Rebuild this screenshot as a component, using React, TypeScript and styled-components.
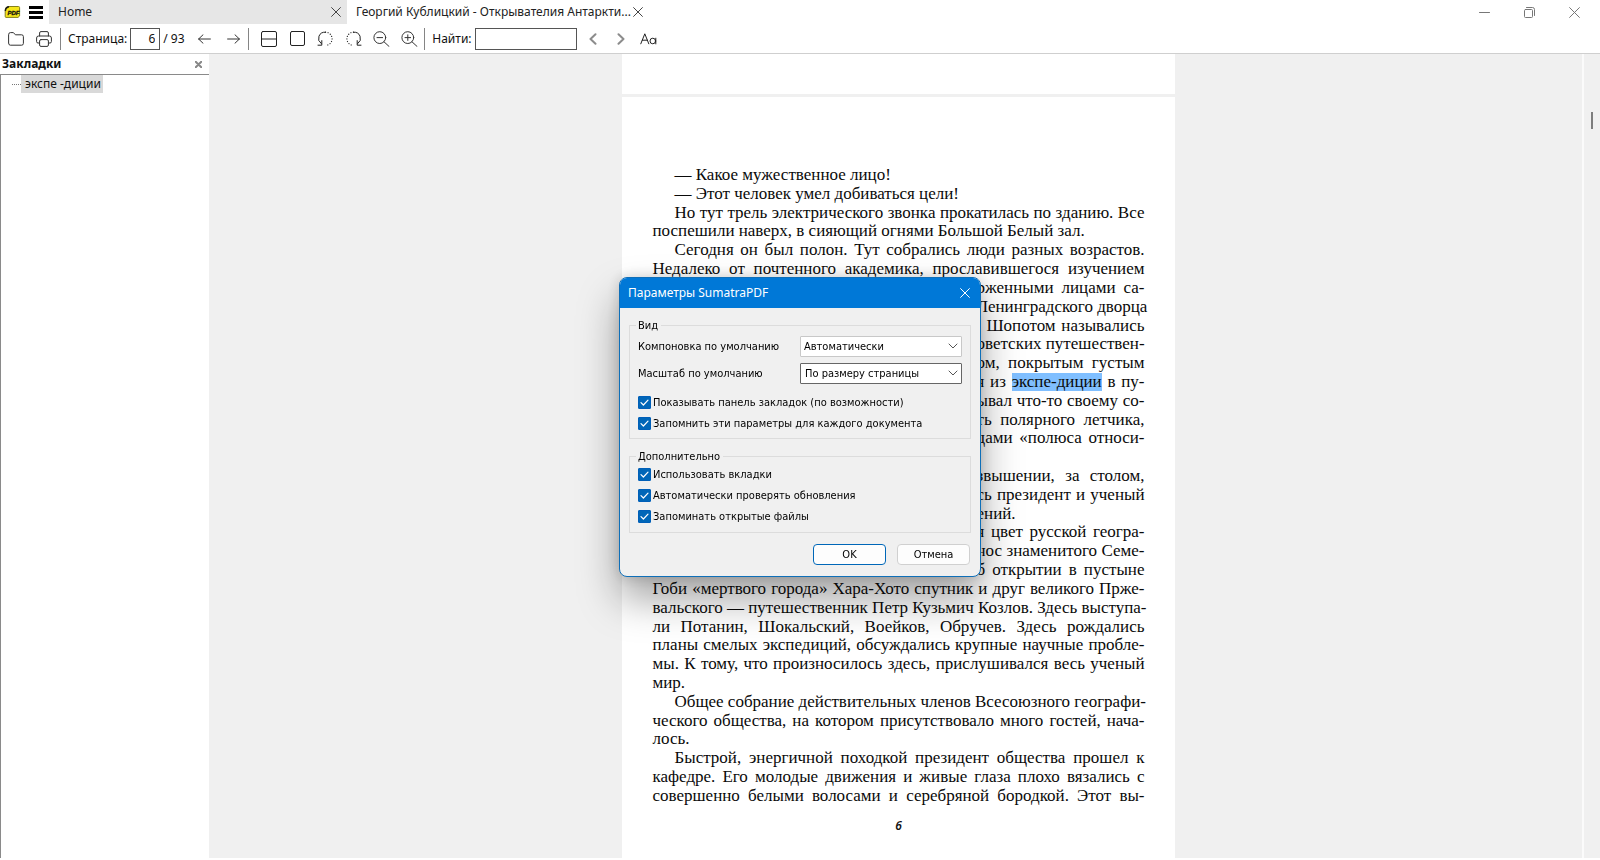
import React, { useState } from "react";
import styled, { createGlobalStyle, css } from "styled-components";

const uiFont = `"Noto Sans", "Open Sans", sans-serif`;
const dialogFont = `"DejaVu Sans Condensed", "DejaVu Sans", sans-serif`;
const bookFont = `"Liberation Serif", serif`;

const GlobalStyle = createGlobalStyle`
  *, *::before, *::after { box-sizing: border-box; }
  body { margin: 0; background: #fff; color: #111; font-family: ${uiFont}; font-size: 12px; }
  button, input, select { font: inherit; color: inherit; margin: 0; padding: 0; }
  p, h1, h2 { margin: 0; }
`;

const Shell = styled.div`
  display: flex;
  flex-direction: column;
  height: 100vh;
  padding-bottom: 2px;
  overflow: hidden;
`;

/* ---------- title bar ---------- */

const TitleBar = styled.header`
  display: flex;
  height: 24px;
  flex: none;
`;

const IconButton = styled.button<{ $width: number }>`
  display: flex;
  align-items: center;
  justify-content: center;
  width: ${(p) => p.$width}px;
  flex: none;
  border: 0;
  background: none;
`;

const AppMark = styled.div`
  display: flex;
  align-items: center;
  padding-left: 4px;
  width: 23px;
`;

const Tabs = styled.nav`
  display: flex;
  flex: 1;
  min-width: 0;
  padding-left: 1px;
`;

const Tab = styled.div<{ $active?: boolean }>`
  display: flex;
  align-items: center;
  justify-content: space-between;
  width: 298px;
  padding-left: 9px;
  background: ${(p) => (p.$active ? "#fff" : "#e6e6e6")};
`;

const TabLink = styled.a`
  color: #222;
  line-height: 24px;
  text-decoration: none;
  white-space: nowrap;
`;

const WindowButtons = styled.div`
  display: flex;
  padding-right: 3px;
`;

/* ---------- toolbar ---------- */

const Toolbar = styled.div`
  display: flex;
  align-items: center;
  flex: none;
  height: 30px;
  padding-left: 2px;
  border-bottom: 1px solid #cfcfcf;
`;

const Divider = styled.span`
  width: 1px;
  height: 22px;
  margin: 0 3px;
  background: #858585;
`;

const FieldLabel = styled.label`
  display: flex;
  align-items: center;
  gap: 3px;
  padding-left: 4px;
  white-space: nowrap;
`;

const TextBox = styled.input<{ $width: number }>`
  width: ${(p) => p.$width}px;
  height: 22px;
  padding: 0 4px;
  border: 1px solid #555;
  border-radius: 0;
  background: #fff;
  text-align: right;
  outline: 0;
`;

const PageTotal = styled.span`
  width: 26px;
  padding-left: 3px;
  white-space: nowrap;
`;

/* ---------- body ---------- */

const Body = styled.div`
  display: flex;
  flex: 1;
  min-height: 0;
`;

const Sidebar = styled.aside`
  display: flex;
  flex-direction: column;
  width: 209px;
  flex: none;
  background: #fff;
`;

const SidebarHeader = styled.div`
  display: flex;
  align-items: center;
  justify-content: space-between;
  height: 20px;
  padding-left: 2px;
`;

const SidebarTitle = styled.h2`
  font-size: 12px;
  line-height: 20px;
`;

const Tree = styled.div`
  flex: 1;
  border-top: 1px solid #8a8a8a;
  border-left: 1px solid #8a8a8a;
`;

const TreeRow = styled.div`
  display: flex;
  align-items: center;
  padding-left: 11px;
  height: 18px;
`;

const Branch = styled.span`
  width: 9px;
  border-top: 1px dotted #777;
`;

const TreeLink = styled.a`
  padding: 0 2px 0 4px;
  line-height: 18px;
  background: #d9d9d9;
  color: #111;
  text-decoration: none;
  white-space: nowrap;
`;

const Viewer = styled.main`
  display: flex;
  flex-direction: column;
  align-items: center;
  flex: 1;
  min-width: 0;
  padding-left: 5px;
  overflow: hidden;
  background: #f0f0f0;
`;

const PreviousPage = styled.div`
  flex: none;
  width: 553px;
  height: 40px;
  margin-bottom: 3px;
  background: #fff;
`;

const Page = styled.article`
  display: flex;
  flex-direction: column;
  flex: 1 0 auto;
  width: 553px;
  padding: 69px 30px 25px 31px;
  background: #fff;
`;

const PageText = styled.div`
  display: flex;
  flex-direction: column;
  justify-content: space-between;
  height: 639px;
  font-family: ${bookFont};
  font-size: 17px;
  color: #0a0a0a;
`;

const Paragraph = styled.p`
  display: contents;
`;

const Line = styled.span<{ $indent?: boolean; $ragged?: boolean; $tail?: boolean }>`
  height: 18px;
  line-height: 18px;
  white-space: nowrap;
  text-align-last: ${(p) => (p.$ragged ? "left" : "justify")};
  padding-left: ${(p) => (p.$indent ? "22px" : "0")};
  ${(p) =>
    p.$tail &&
    css`
      align-self: flex-end;
      width: 168px;
    `}
`;

const Highlight = styled.mark`
  display: inline-block;
  background: #80bfff;
  color: inherit;
`;

const Folio = styled.div`
  padding-top: 12px;
  text-align: center;
  font-size: 12px;
  font-style: italic;
  font-weight: 600;
  line-height: 18px;
`;

const ScrollBar = styled.div`
  display: flex;
  flex-direction: column;
  align-items: center;
  width: 18px;
  flex: none;
  padding-top: 58px;
  border-left: 2px solid #fbfbfb;
  background: #f0f0f0;
`;

const Thumb = styled.div`
  width: 2px;
  height: 17px;
  background: #7d7d7d;
`;

/* ---------- settings dialog ---------- */

const Overlay = styled.div`
  position: fixed;
  inset: 0;
  display: flex;
  align-items: center;
  justify-content: center;
  padding-bottom: 7px;
`;

const Dialog = styled.form`
  width: 362px;
  border: 1px solid #0f6fb8;
  border-radius: 8px;
  overflow: hidden;
  background: #f0f0f0;
  box-shadow: 0 22px 40px rgba(0, 0, 0, 0.36), 0 0 14px rgba(0, 0, 0, 0.16);
  font-family: ${dialogFont};
  font-size: 11px;
  color: #000;
`;

const DialogTitle = styled.div`
  display: flex;
  justify-content: space-between;
  height: 30px;
  padding-left: 8px;
  background: #0078d7;
  color: #fff;
`;

const DialogName = styled.h1`
  font-family: ${uiFont};
  font-size: 12px;
  font-weight: 400;
  line-height: 30px;
`;

const DialogBody = styled.div`
  display: flex;
  flex-direction: column;
  gap: 11px;
  padding: 11px 9px;
`;

const Group = styled.fieldset<{ $top: number; $bottom: number }>`
  display: flex;
  flex-direction: column;
  gap: 6px;
  min-width: 0;
  margin: 0;
  padding: ${(p) => p.$top}px 8px ${(p) => p.$bottom}px;
  border: 1px solid #dcdcdc;
`;

const Legend = styled.legend`
  margin-left: -2px;
  padding: 0 3px 0 2px;
  line-height: 14px;
`;

const Row = styled.div`
  display: flex;
  align-items: center;
  justify-content: space-between;
  height: 21px;
`;

const SelectBox = styled.div`
  display: grid;
  align-items: center;
  width: 162px;

  > * {
    grid-area: 1 / 1;
  }
  > svg {
    justify-self: end;
    margin-right: 4px;
    pointer-events: none;
  }
`;

const Select = styled.select<{ $focused?: boolean }>`
  appearance: none;
  width: 100%;
  height: 21px;
  padding: 0 18px 0 ${(p) => (p.$focused ? 4 : 3)}px;
  border: 1px solid ${(p) => (p.$focused ? "#666" : "#c8c8c8")};
  border-radius: 1px;
  background: #fff;
`;

const Checks = styled.div<{ $spaced?: boolean }>`
  display: flex;
  flex-direction: column;
  gap: 8px;
  padding-top: ${(p) => (p.$spaced ? 6 : 0)}px;
`;

const CheckLabel = styled.label`
  display: flex;
  align-items: center;
  gap: 2px;
  height: 13px;
  white-space: nowrap;
`;

const CheckBox = styled.span`
  display: grid;
  width: 13px;
  height: 13px;

  > * {
    grid-area: 1 / 1;
  }
  > svg {
    pointer-events: none;
  }
`;

const CheckInput = styled.input`
  appearance: none;
  width: 13px;
  height: 13px;
  border: 1px solid #005fb8;
  border-radius: 1px;

  &:checked {
    background: #0066b8;
  }
`;

const Actions = styled.div`
  display: flex;
  justify-content: flex-end;
  gap: 11px;
  padding-right: 1px;
`;

const PushButton = styled.button<{ $primary?: boolean }>`
  width: 73px;
  height: 21px;
  border: 1px solid ${(p) => (p.$primary ? "#0067b8" : "#d0d0d0")};
  border-radius: 4px;
  background: #fdfdfd;
`;

/* ---------- icons ---------- */

const Svg = ({ w, h, sw = 1, color = "#333", children }: { w: number; h: number; sw?: number; color?: string; children: React.ReactNode }) => (
  <svg width={w} height={h} viewBox={`0 0 ${w} ${h}`} fill="none" stroke={color} strokeWidth={sw} strokeLinecap="round" strokeLinejoin="round" aria-hidden="true">
    {children}
  </svg>
);

const Cross = ({ size = 10, color = "#444", sw = 1 }: { size?: number; color?: string; sw?: number }) => (
  <Svg w={size} h={size} color={color} sw={sw}>
    <path d={`M.6 .6 L${size - 0.6} ${size - 0.6} M${size - 0.6} .6 L.6 ${size - 0.6}`} />
  </Svg>
);

const AppIcon = () => (
  <svg width="17" height="14" viewBox="0 0 17 14" aria-hidden="true">
    <path d="M4 1.5H14.4Q15.6 1.5 15.6 2.6V11L14 12.4H2Q1.2 12.4 1.2 11.4V5Q1.4 2 4 1.5z" fill="#f5e61a" stroke="#85801a" strokeWidth="1" />
    <path d="M1.4 6Q1.4 2.4 5 1.8" stroke="#1a1a1a" fill="none" strokeWidth="1.4" />
    <text x="3.4" y="9.6" fontFamily="Liberation Sans" fontSize="6" fontWeight="700" fontStyle="italic" fill="#111" stroke="#111" strokeWidth=".3">PDF</text>
  </svg>
);

const FolderIcon = () => (
  <Svg w={16} h={14}>
    <path d="M.6 2.4Q.6 .6 2.4 .6H5.4L7.4 2.8H13.6Q15.4 2.8 15.4 4.6V11.4Q15.4 13.2 13.6 13.2H2.4Q.6 13.2 .6 11.4z" />
  </Svg>
);

const PrinterIcon = () => (
  <Svg w={16} h={16}>
    <path d="M3.6 5V2Q3.6 .6 5 .6H11Q12.4 .6 12.4 2V5" />
    <path d="M3.6 12H2Q.6 12 .6 10.6V7Q.6 5 2.6 5H13.4Q15.4 5 15.4 7V10.6Q15.4 12 14 12H12.4" />
    <rect x="3.6" y="8.6" width="8.8" height="6.8" rx="1.4" />
  </Svg>
);

const ArrowIcon = ({ right }: { right?: boolean }) => (
  <Svg w={13} h={10}>
    <path d={right ? "M.6 5H12.4M8 .8L12.4 5L8 9.2" : "M12.4 5H.6M5 .8L.6 5L5 9.2"} />
  </Svg>
);

const ContinuousIcon = () => (
  <Svg w={16} h={16} color="#222">
    <rect x=".5" y=".5" width="15" height="15" rx="1.5" />
    <path d="M.5 8H15.5" />
  </Svg>
);

const SinglePageIcon = () => (
  <Svg w={15} h={15} color="#222">
    <rect x=".5" y=".5" width="14" height="14" rx="1.5" />
  </Svg>
);

const RotateIcon = ({ right }: { right?: boolean }) => (
  <Svg w={16} h={16} color="#222">
    <g transform={right ? "translate(16 0) scale(-1 1)" : undefined}>
      <path d="M8.5 1.2A6.3 6.3 0 0 0 4.2 12.6" />
      <path d="M4.8 9.6V14.2H1" />
      <path d="M8.5 1.2A6.6 6.6 0 0 1 8.5 14.4" strokeDasharray=".1 2.5" strokeWidth="1.2" />
    </g>
  </Svg>
);

const ZoomIcon = ({ plus }: { plus?: boolean }) => (
  <Svg w={17} h={16}>
    <circle cx="6.8" cy="6.6" r="5.9" />
    <path d="M11 10.8L16 15.4M4 6.6H9.6" />
    {plus && <path d="M6.8 3.8V9.4" />}
  </Svg>
);

const ChevronIcon = ({ right }: { right?: boolean }) => (
  <Svg w={8} h={12} color="#8c8c8c" sw={2}>
    <path d={right ? "M1.5 1.2L6.5 6L1.5 10.8" : "M6.5 1.2L1.5 6L6.5 10.8"} />
  </Svg>
);

const MatchCaseIcon = () => (
  <Svg w={17} h={12} color="#222">
    <path d="M.8 10.8L4.8 .8L8.8 10.8M2.3 7.2H7.3" />
    <circle cx="12.8" cy="8" r="2.8" />
    <path d="M15.8 5.2V10.9" />
  </Svg>
);

const DropIcon = () => (
  <Svg w={10} h={6} color="#555">
    <path d="M1 1L5 5L9 1" />
  </Svg>
);

const TickIcon = () => (
  <Svg w={13} h={13} color="#fff" sw={1.2}>
    <path d="M3 6.6L5.4 9L10 4.2" />
  </Svg>
);

/* ---------- content ---------- */

const Book = () => (
  <PageText>
    <Paragraph><Line $indent $ragged>— Какое мужественное лицо!</Line></Paragraph>
    <Paragraph><Line $indent $ragged>— Этот человек умел добиваться цели!</Line></Paragraph>
    <Paragraph>
      <Line $indent>Но тут трель электрического звонка прокатилась по зданию. Все</Line>
      <Line $ragged>поспешили наверх, в сияющий огнями Большой Белый зал.</Line>
    </Paragraph>
    <Paragraph>
      <Line $indent>Сегодня он был полон. Тут собрались люди разных возрастов.</Line>
      <Line>Недалеко от почтенного академика, прославившегося изучением</Line>
      <Line $tail>рженными лицами са-</Line>
      <Line $tail>Ленинградского дворца</Line>
      <Line $tail>. Шопотом назывались</Line>
      <Line $tail>оветских путешествен-</Line>
      <Line $tail>ом, покрытым густым</Line>
      <Line $tail>я из <Highlight>экспе-диции</Highlight> в пу-</Line>
      <Line $tail>ывал что-то своему со-</Line>
      <Line $tail>ть полярного летчика,</Line>
      <Line $tail>дами «полюса относи-</Line>
      <Line $tail />
    </Paragraph>
    <Paragraph>
      <Line $tail>звышении, за столом,</Line>
      <Line $tail>сь президент и ученый</Line>
      <Line $tail $ragged>ений.</Line>
    </Paragraph>
    <Paragraph>
      <Line $tail>я цвет русской геогра-</Line>
      <Line $tail>нос знаменитого Семе-</Line>
      <Line $tail>б открытии в пустыне</Line>
      <Line>Гоби «мертвого города» Хара-Хото спутник и друг великого Прже-</Line>
      <Line>вальского — путешественник Петр Кузьмич Козлов. Здесь выступа-</Line>
      <Line>ли Потанин, Шокальский, Воейков, Обручев. Здесь рождались</Line>
      <Line>планы смелых экспедиций, обсуждались крупные научные пробле-</Line>
      <Line>мы. К тому, что произносилось здесь, прислушивался весь ученый</Line>
      <Line $ragged>мир.</Line>
    </Paragraph>
    <Paragraph>
      <Line $indent>Общее собрание действительных членов Всесоюзного географи-</Line>
      <Line>ческого общества, на котором присутствовало много гостей, нача-</Line>
      <Line $ragged>лось.</Line>
    </Paragraph>
    <Paragraph>
      <Line $indent>Быстрой, энергичной походкой президент общества прошел к</Line>
      <Line>кафедре. Его молодые движения и живые глаза плохо вязались с</Line>
      <Line>совершенно белыми волосами и серебряной бородкой. Этот вы-</Line>
    </Paragraph>
  </PageText>
);

const Check = ({ children }: { children: string }) => {
  const [on, setOn] = useState(true);
  return (
    <CheckLabel>
      <CheckBox>
        <CheckInput type="checkbox" checked={on} onChange={() => setOn(!on)} />
        {on && <TickIcon />}
      </CheckBox>
      {children}
    </CheckLabel>
  );
};

const Settings = () => (
  <Overlay>
    <Dialog role="dialog" aria-labelledby="settings-title" onSubmit={(e) => e.preventDefault()}>
      <DialogTitle>
        <DialogName id="settings-title">Параметры SumatraPDF</DialogName>
        <IconButton $width={30} type="button" aria-label="Закрыть"><Cross color="#fff" /></IconButton>
      </DialogTitle>
      <DialogBody>
        <Group $top={3} $bottom={8}>
          <Legend>Вид</Legend>
          <Row>
            <label htmlFor="layout">Компоновка по умолчанию</label>
            <SelectBox>
              <Select id="layout"><option>Автоматически</option></Select>
              <DropIcon />
            </SelectBox>
          </Row>
          <Row>
            <label htmlFor="scale">Масштаб по умолчанию</label>
            <SelectBox>
              <Select id="scale" $focused><option>По размеру страницы</option></Select>
              <DropIcon />
            </SelectBox>
          </Row>
          <Checks $spaced>
            <Check>Показывать панель закладок (по возможности)</Check>
            <Check>Запомнить эти параметры для каждого документа</Check>
          </Checks>
        </Group>
        <Group $top={4} $bottom={9}>
          <Legend>Дополнительно</Legend>
          <Checks>
            <Check>Использовать вкладки</Check>
            <Check>Автоматически проверять обновления</Check>
            <Check>Запоминать открытые файлы</Check>
          </Checks>
        </Group>
        <Actions>
          <PushButton $primary type="submit">OK</PushButton>
          <PushButton type="button">Отмена</PushButton>
        </Actions>
      </DialogBody>
    </Dialog>
  </Overlay>
);

export default function App() {
  return (
    <>
      <GlobalStyle />
      <Shell>
        <TitleBar>
          <AppMark><AppIcon /></AppMark>
          <IconButton $width={25} aria-label="Меню">
            <Svg w={14} h={13} sw={0}><path fill="#000" d="M0 0H14V3H0zM0 5H14V8H0zM0 10H14V13H0z" /></Svg>
          </IconButton>
          <Tabs>
            <Tab>
              <TabLink href="#home">Home</TabLink>
              <IconButton $width={22} aria-label="Закрыть вкладку"><Cross /></IconButton>
            </Tab>
            <Tab $active>
              <TabLink href="#book">Георгий Кублицкий - Открывателия Антаркти...</TabLink>
              <IconButton $width={14} aria-label="Закрыть вкладку"><Cross /></IconButton>
            </Tab>
          </Tabs>
          <WindowButtons>
            <IconButton $width={45} aria-label="Свернуть">
              <Svg w={11} h={11} color="#777"><path d="M.5 5.5H10.5" /></Svg>
            </IconButton>
            <IconButton $width={45} aria-label="Восстановить">
              <Svg w={11} h={11} color="#777">
                <rect x=".5" y="2.5" width="8" height="8" rx="1" />
                <path d="M2.5 .5H8.5Q10.5 .5 10.5 2.5V8.5" />
              </Svg>
            </IconButton>
            <IconButton $width={45} aria-label="Закрыть"><Cross size={11} color="#777" /></IconButton>
          </WindowButtons>
        </TitleBar>

        <Toolbar>
          <IconButton $width={28} aria-label="Открыть"><FolderIcon /></IconButton>
          <IconButton $width={27} aria-label="Печать"><PrinterIcon /></IconButton>
          <Divider />
          <FieldLabel>
            Страница:
            <TextBox $width={30} defaultValue="6" />
          </FieldLabel>
          <PageTotal>/ 93</PageTotal>
          <IconButton $width={36} aria-label="Назад"><ArrowIcon /></IconButton>
          <IconButton $width={23} aria-label="Вперёд"><ArrowIcon right /></IconButton>
          <Divider />
          <IconButton $width={34} aria-label="Непрерывно"><ContinuousIcon /></IconButton>
          <IconButton $width={22} aria-label="Одна страница"><SinglePageIcon /></IconButton>
          <IconButton $width={34} aria-label="Повернуть влево"><RotateIcon /></IconButton>
          <IconButton $width={23} aria-label="Повернуть вправо"><RotateIcon right /></IconButton>
          <IconButton $width={33} aria-label="Уменьшить"><ZoomIcon /></IconButton>
          <IconButton $width={23} aria-label="Увеличить"><ZoomIcon plus /></IconButton>
          <Divider />
          <FieldLabel>
            Найти:
            <TextBox $width={102} />
          </FieldLabel>
          <IconButton $width={32} aria-label="Найти предыдущее"><ChevronIcon /></IconButton>
          <IconButton $width={24} aria-label="Найти следующее"><ChevronIcon right /></IconButton>
          <IconButton $width={32} aria-label="Учитывать регистр"><MatchCaseIcon /></IconButton>
        </Toolbar>

        <Body>
          <Sidebar>
            <SidebarHeader>
              <SidebarTitle>Закладки</SidebarTitle>
              <IconButton $width={21} aria-label="Закрыть закладки"><Cross size={7} color="#888" sw={2} /></IconButton>
            </SidebarHeader>
            <Tree>
              <TreeRow>
                <Branch />
                <TreeLink href="#bookmark">экспе -диции</TreeLink>
              </TreeRow>
            </Tree>
          </Sidebar>
          <Viewer>
            <PreviousPage />
            <Page>
              <Book />
              <Folio>6</Folio>
            </Page>
          </Viewer>
          <ScrollBar><Thumb /></ScrollBar>
        </Body>
      </Shell>
      <Settings />
    </>
  );
}
